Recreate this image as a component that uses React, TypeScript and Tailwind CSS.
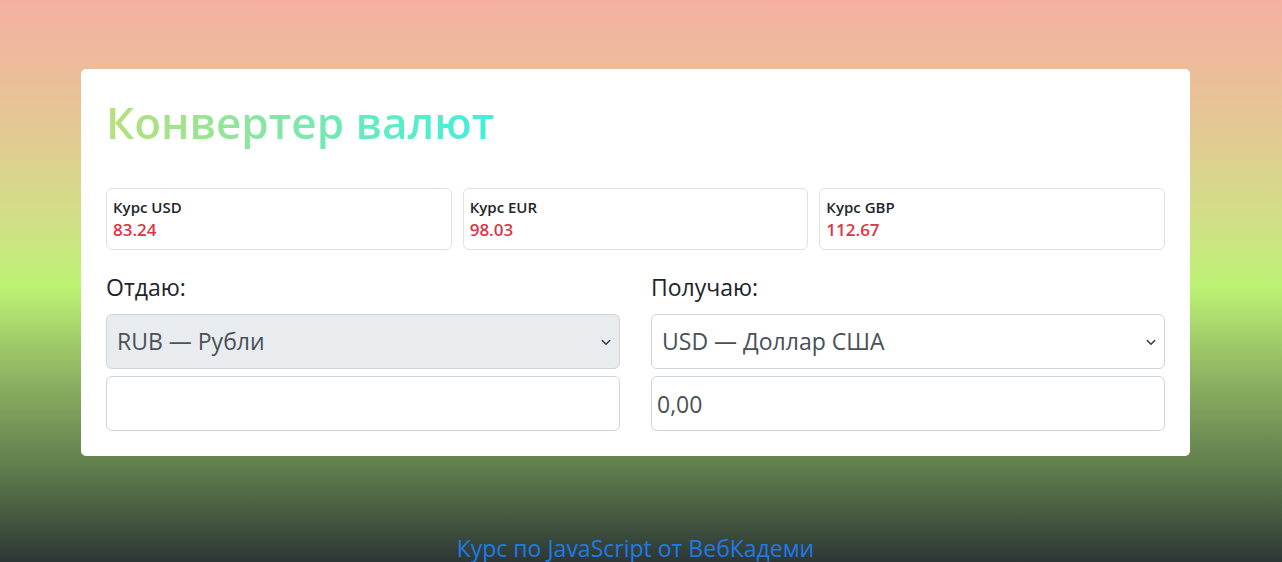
import { useState } from 'react'

const rates = [
  { code: 'USD', value: '83.24' },
  { code: 'EUR', value: '98.03' },
  { code: 'GBP', value: '112.67' },
]

const chevron = (
  <svg width="12" height="12" viewBox="0 0 16 16" className="pointer-events-none absolute right-[8px] top-1/2 -translate-y-1/2">
    <path d="M3 6l5 5 5-5" fill="none" stroke="#343a40" strokeWidth="2" strokeLinecap="round" strokeLinejoin="round" />
  </svg>
)

export default function App() {
  const [amount, setAmount] = useState('')

  return (
    <div
      className="h-screen w-full overflow-hidden bg-[linear-gradient(to_bottom,#f6b0a2_0%,#e6c595_20%,#d3dd88_38%,#bdf274_51%,#8cb062_68%,#5e7a4c_84%,#2c3735_100%)] pt-[69px]"
      style={{ fontFamily: '"Open Sans", "Noto Sans", sans-serif' }}
    >
      <div className="ml-[81px] w-[1109px] rounded-[5px] bg-white px-[25px] pt-[25px] pb-[25px]">
        <h1 className="mb-[37px] inline-block bg-[linear-gradient(to_right,#b8e07a,#3ef0df)] bg-clip-text text-[44px] leading-[1.3] font-semibold text-transparent">
          Конвертер валют
        </h1>

        <div className="grid grid-cols-3 gap-[11px]">
          {rates.map((r) => (
            <div key={r.code} className="h-[62px] rounded-[6px] border border-[#dee2e6] px-[6px] pt-[8px]">
              <div className="text-[15px] leading-[20px] font-semibold text-[#212529]">Курс {r.code}</div>
              <div className="text-[17px] leading-[26px] font-semibold text-[#dc3545]">{r.value}</div>
            </div>
          ))}
        </div>

        <div className="mt-[21px] grid grid-cols-2 gap-[31px]">
          <div>
            <div className="mb-[11px] text-[23px] leading-[32px] text-[#212529]">Отдаю:</div>
            <div className="relative mb-[7px]">
              <select
                disabled
                className="h-[55px] w-full appearance-none rounded-[6px] border border-[#ced4da] bg-[#e9ecef] pl-[10px] text-[23px] text-[#495057]"
                defaultValue="RUB"
              >
                <option value="RUB">RUB — Рубли</option>
              </select>
              {chevron}
            </div>
            <input
              type="number"
              value={amount}
              onChange={(e) => setAmount(e.target.value)}
              className="h-[55px] w-full rounded-[6px] border border-[#ced4da] bg-white px-[5px] text-[23px] text-[#212529] outline-none"
            />
          </div>
          <div>
            <div className="mb-[11px] text-[23px] leading-[32px] text-[#212529]">Получаю:</div>
            <div className="relative mb-[7px]">
              <select
                className="h-[55px] w-full appearance-none rounded-[6px] border border-[#ced4da] bg-white pl-[10px] text-[23px] text-[#495057]"
                defaultValue="USD"
              >
                <option value="USD">USD — Доллар США</option>
                <option value="EUR">EUR — Евро</option>
                <option value="GBP">GBP — Фунт стерлингов</option>
              </select>
              {chevron}
            </div>
            <input
              type="text"
              readOnly
              value="0,00"
              className="h-[55px] w-full rounded-[6px] border border-[#ced4da] bg-white px-[5px] text-[23px] text-[#495057] outline-none"
            />
          </div>
        </div>
      </div>

      <div className="ml-[81px] mt-[76px] w-[1109px] text-center">
        <a href="#" className="text-[23px] leading-[32px] text-[#1f7ae8]">
          Курс по JavaScript от ВебКадеми
        </a>
      </div>
    </div>
  )
}
